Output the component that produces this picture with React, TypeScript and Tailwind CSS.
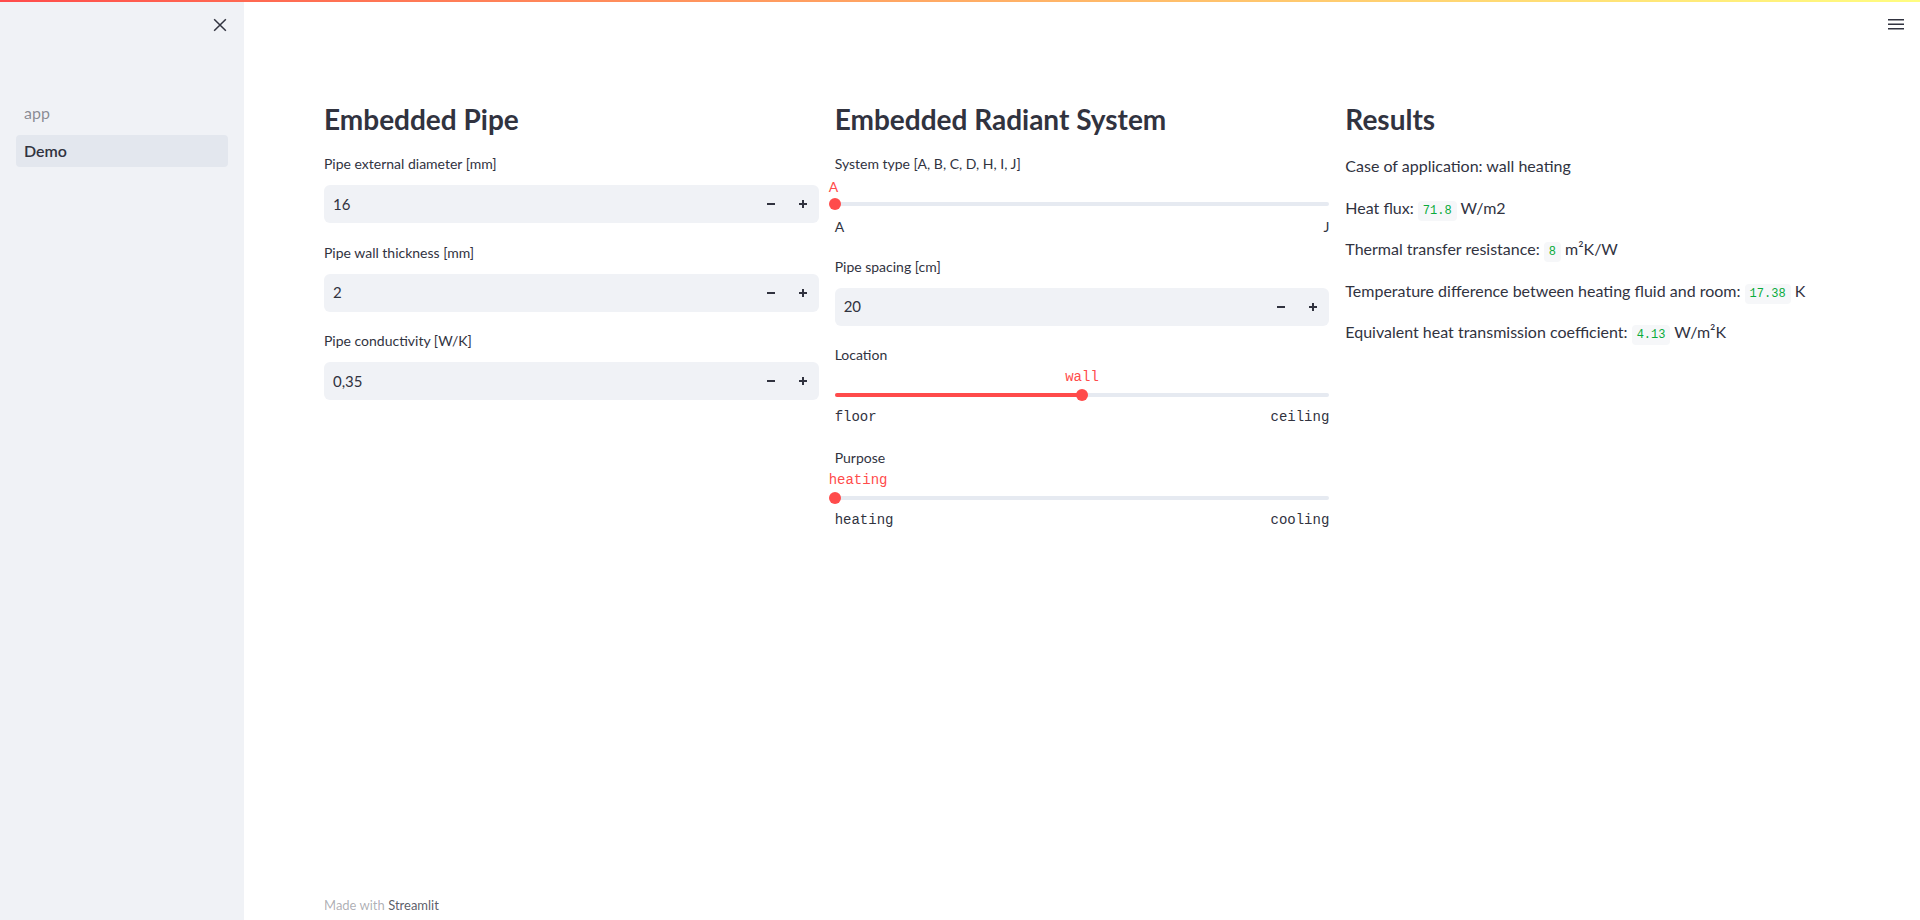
import React from "react";

type SliderProps = {
  label: string;
  value: string;
  min: string;
  max: string;
  pos: "start" | "middle";
  mono?: boolean;
};

const thumbPos = {
  start: "left-[-6px]",
  middle: "left-[calc(50%-6px)]",
};

const valuePos = {
  start: "left-[-6px]",
  middle: "left-1/2 -translate-x-1/2",
};

const fillWidth = {
  start: "w-0",
  middle: "w-1/2",
};

function MinusIcon() {
  return (
    <svg width="10" height="10" viewBox="0 0 10 10">
      <path d="M1 5h8" stroke="#31333f" strokeWidth="2" />
    </svg>
  );
}

function PlusIcon() {
  return (
    <svg width="10" height="10" viewBox="0 0 10 10">
      <path d="M1 5h8M5 1v8" stroke="#31333f" strokeWidth="2" />
    </svg>
  );
}

function NumberInput({ label, value }: { label: string; value: string }) {
  return (
    <div className="flex flex-col">
      <label className="mb-[11px] text-sm leading-[21px]">{label}</label>
      <div className="flex h-[38px] items-center rounded-md bg-[#f0f2f6]">
        <span className="flex-1 pl-[9px] text-[15px]">{value}</span>
        <button className="flex h-full w-8 items-center justify-center">
          <MinusIcon />
        </button>
        <button className="flex h-full w-8 items-center justify-center">
          <PlusIcon />
        </button>
      </div>
    </div>
  );
}

function Slider({ label, value, min, max, pos, mono }: SliderProps) {
  const font = mono ? "font-['Liberation_Mono',monospace]" : "";
  return (
    <div className="flex flex-col">
      <label className="text-sm leading-[21px]">{label}</label>
      <div className={`relative mt-[2px] h-[21px] text-sm leading-[21px] text-[#ff4b4b] ${font}`}>
        <span className={`absolute top-0 whitespace-nowrap ${valuePos[pos]}`}>{value}</span>
      </div>
      <div className="relative mt-[1px] flex h-3 items-center">
        <div className="relative h-1 w-full rounded-full bg-[#e6eaf1]">
          <div className={`absolute left-0 top-0 h-1 rounded-full bg-[#ff4b4b] ${fillWidth[pos]}`} />
        </div>
        <div className={`absolute top-0 h-3 w-3 rounded-full bg-[#ff4b4b] ${thumbPos[pos]}`} />
      </div>
      <div className={`mt-[6px] flex justify-between text-sm leading-[21px] ${font}`}>
        <span>{min}</span>
        <span>{max}</span>
      </div>
    </div>
  );
}

function Code({ children }: { children: React.ReactNode }) {
  return (
    <code className="rounded-[4px] bg-[#f6f7f9] px-[5px] py-[3px] font-['Liberation_Mono',monospace] text-[12px] leading-none text-[#09ab3b]">
      {children}
    </code>
  );
}

function Heading({ children }: { children: React.ReactNode }) {
  return (
    <h3 className="mb-[17.5px] text-[28px] font-bold leading-[34px]">{children}</h3>
  );
}

export default function App() {
  return (
    <div className="relative flex h-screen w-full overflow-hidden bg-white font-['Lato',sans-serif] text-[#31333f]">
      <div className="absolute left-0 right-0 top-0 z-10 h-[2px] bg-linear-to-r from-[#ff4b4b] to-[#fffd80]" />

      <aside className="flex w-[244px] shrink-0 flex-col bg-[#f0f2f6]">
        <div className="flex justify-end pr-[14px] pt-[15px]">
          <svg width="20" height="20" viewBox="0 0 24 24">
            <path d="M5 5l14 14M19 5L5 19" stroke="#31333f" strokeWidth="1.8" fill="none" />
          </svg>
        </div>
        <nav className="mt-[62px] flex flex-col gap-[6px] px-4">
          <a className="flex h-8 items-center rounded-[4px] px-2 text-base text-[#31333f]/55">app</a>
          <a className="flex h-8 items-center rounded-[4px] bg-[#e3e7ee] px-2 text-base font-semibold">
            Demo
          </a>
        </nav>
      </aside>

      <main className="relative flex flex-1 flex-col">
        <button className="absolute right-4 top-[18px]">
          <svg width="16" height="12" viewBox="0 0 16 12">
            <rect x="0" y="1" width="16" height="1.5" fill="#31333f" />
            <rect x="0" y="5.5" width="16" height="1.5" fill="#31333f" />
            <rect x="0" y="10" width="16" height="1.5" fill="#31333f" />
          </svg>
        </button>

        <div className="grid grid-cols-3 gap-4 px-20 pt-[101.5px]">
          <section className="flex flex-col">
            <Heading>Embedded Pipe</Heading>
            <div className="flex flex-col gap-[18.5px]">
              <NumberInput label="Pipe external diameter [mm]" value="16" />
              <NumberInput label="Pipe wall thickness [mm]" value="2" />
              <NumberInput label="Pipe conductivity [W/K]" value="0,35" />
            </div>
          </section>

          <section className="flex flex-col">
            <Heading>Embedded Radiant System</Heading>
            <div className="flex flex-col gap-[18.5px]">
              <Slider label="System type [A, B, C, D, H, I, J]" value="A" min="A" max="J" pos="start" />
              <NumberInput label="Pipe spacing [cm]" value="20" />
              <Slider label="Location" value="wall" min="floor" max="ceiling" pos="middle" mono />
              <Slider label="Purpose" value="heating" min="heating" max="cooling" pos="start" mono />
            </div>
          </section>

          <section className="flex flex-col">
            <Heading>Results</Heading>
            <div className="flex flex-col gap-4 text-base leading-[25.6px]">
              <p>Case of application: wall heating</p>
              <p>
                Heat flux: <Code>71.8</Code> W/m2
              </p>
              <p>
                Thermal transfer resistance: <Code>8</Code> m²K/W
              </p>
              <p>
                Temperature difference between heating fluid and room: <Code>17.38</Code> K
              </p>
              <p>
                Equivalent heat transmission coefficient: <Code>4.13</Code> W/m²K
              </p>
            </div>
          </section>
        </div>

        <footer className="mt-auto px-20 pb-[5px] text-[13px] leading-5 text-[#31333f]/40">
          Made with <span className="text-[#31333f]/80">Streamlit</span>
        </footer>
      </main>
    </div>
  );
}
